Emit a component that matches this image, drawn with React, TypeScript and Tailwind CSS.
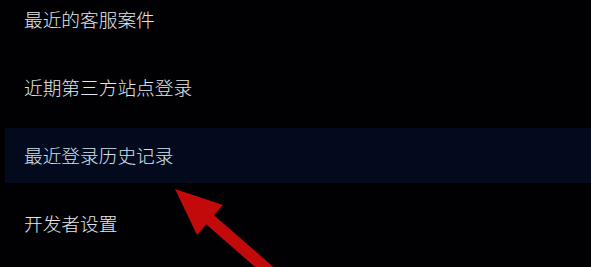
import React from "react";

const items = ["最近的客服案件", "近期第三方站点登录", "最近登录历史记录", "开发者设置"];

export default function App() {
  return (
    <div className="relative w-[591px] h-[267px] overflow-hidden bg-[#010103]" style={{ fontFamily: '"Noto Sans CJK SC", "Noto Sans", sans-serif' }}>
      <div className="flex flex-col gap-[13px] mt-[-8px] pl-[5px]">
        {items.map((t, i) => (
          <div
            key={t}
            className={`h-[55px] flex items-center pl-[19px] text-[18.7px] font-light ${i === 2 ? "bg-[#030a1d] text-[#d2e2ee]" : "text-[#e2e7ee]"}`}
          >
            {t}
          </div>
        ))}
      </div>
      <svg className="absolute left-0 top-0" width="591" height="267" viewBox="0 0 591 267">
        <polygon points="175,189 223,205 197,235" fill="#c20a0a" />
        <line x1="208" y1="218" x2="285" y2="285" stroke="#c20a0a" strokeWidth="12" />
      </svg>
    </div>
  );
}
